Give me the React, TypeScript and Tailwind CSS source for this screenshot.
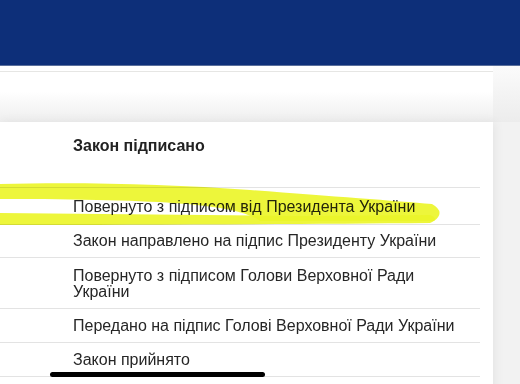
import React from "react";

const rows: { text: string }[] = [
  { text: "Повернуто з підписом від Президента України" },
  { text: "Закон направлено на підпис Президенту України" },
  { text: "Повернуто з підписом Голови Верховної Ради України" },
  { text: "Передано на підпис Голові Верховної Ради України" },
  { text: "Закон прийнято" },
];

export default function App() {
  return (
    <div className="relative w-[520px] h-[384px] overflow-hidden bg-[#f2f2f2] font-['Liberation_Sans',Arial,sans-serif] text-[#262626]">
      <div className="h-[66px] bg-[#0d2f79] border-b border-[#5a6f9c]" />
      <div className="flex h-[56px]">
        <div className="w-[493px] bg-gradient-to-b from-white from-45% to-[#eeeeee] pt-[5px]">
          <div className="h-px bg-[#e6e6e4]" />
        </div>
        <div className="flex-1 bg-gradient-to-b from-[#fbfbfb] to-[#ececec]" />
      </div>
      <div className="flex">
        <div className="w-[493px] bg-white shadow-[2px_0_10px_rgba(0,0,0,0.06)]">
          <div className="mr-[13px] border-b border-[#e3e3e3] h-[66px] pl-[73px] pt-[14px]">
            <div className="text-[16px] font-bold leading-[20px] text-[#222]">Закон підписано</div>
          </div>
          <div className="mr-[13px] border-b border-[#e3e3e3] h-[37px] pl-[73px] pt-[10px] text-[16px] leading-[18px]">
            {rows[0].text}
          </div>
          <div className="mr-[13px] border-b border-[#e3e3e3] h-[33px] pl-[73px] pt-[7px] text-[16px] leading-[18px]">
            {rows[1].text}
          </div>
          <div className="mr-[13px] border-b border-[#e3e3e3] h-[51px] pl-[73px] pr-[40px] pt-[10px] text-[16px] leading-[16px]">
            {rows[2].text}
          </div>
          <div className="mr-[13px] border-b border-[#e3e3e3] h-[34px] pl-[73px] pt-[8px] text-[16px] leading-[18px]">
            {rows[3].text}
          </div>
          <div className="mr-[13px] border-b border-[#e3e3e3] h-[34px] pl-[73px] pt-[8px] text-[16px] leading-[18px]">
            {rows[4].text}
          </div>
          <div className="h-[20px]" />
        </div>
        <div className="flex-1" />
      </div>
      <svg
        className="absolute left-0 top-0 pointer-events-none mix-blend-multiply"
        width="520"
        height="384"
        viewBox="0 0 520 384"
      >
        <path
          d="M0 184 C80 182 170 184 250 190 C330 196 395 201 432 204 Q446 212 434 221 L260 221 C240 206 180 199 0 199 Z"
          fill="#ebf52a"
          opacity="0.92"
        />
        <path
          d="M0 213 C100 214 200 215 300 216 L430 215 Q440 219 430 223 C300 224 150 225 0 225 Z"
          fill="#ebf52a"
          opacity="0.92"
        />
      </svg>
      <div className="absolute left-[50px] top-[372px] w-[215px] h-[5px] rounded-full bg-black" />
    </div>
  );
}
